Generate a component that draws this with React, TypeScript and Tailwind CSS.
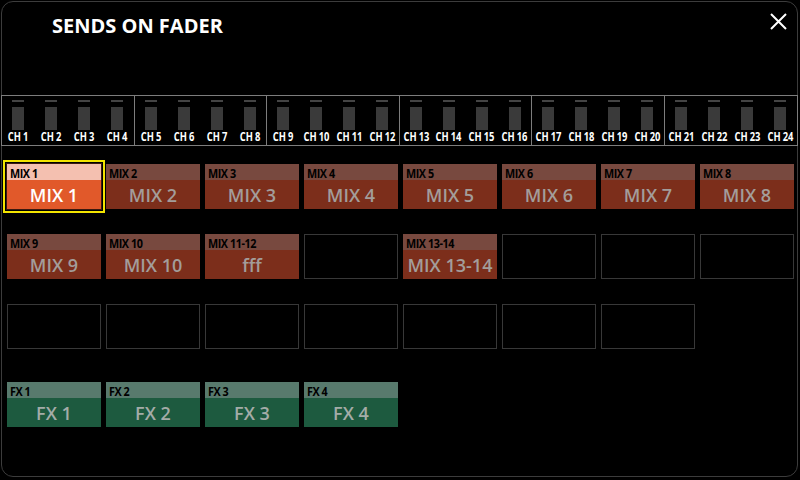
type Tile =
  | { kind: "mix"; label: string; name: string; selected?: boolean }
  | { kind: "fx"; label: string; name: string }
  | { kind: "empty" };

const channels = Array.from({ length: 24 }, (_, i) => `CH ${i + 1}`);

const row1: Tile[] = Array.from({ length: 8 }, (_, i) => ({
  kind: "mix",
  label: `MIX ${i + 1}`,
  name: `MIX ${i + 1}`,
  selected: i === 0,
}));

const row2: Tile[] = [
  { kind: "mix", label: "MIX 9", name: "MIX 9" },
  { kind: "mix", label: "MIX 10", name: "MIX 10" },
  { kind: "mix", label: "MIX 11-12", name: "fff" },
  { kind: "empty" },
  { kind: "mix", label: "MIX 13-14", name: "MIX 13-14" },
  { kind: "empty" },
  { kind: "empty" },
  { kind: "empty" },
];

const row3: Tile[] = Array.from({ length: 7 }, () => ({ kind: "empty" }));

const row4: Tile[] = Array.from({ length: 4 }, (_, i) => ({
  kind: "fx",
  label: `FX ${i + 1}`,
  name: `FX ${i + 1}`,
}));

const TileBox = ({ tile }: { tile: Tile }) => {
  if (tile.kind === "empty") {
    return <div className="h-[45px] border border-[#383838]" />;
  }
  const sel = tile.kind === "mix" && tile.selected;
  const head =
    tile.kind === "fx" ? "bg-[#587a6d]" : sel ? "bg-[#f4c0b0]" : "bg-[#78493f]";
  const body =
    tile.kind === "fx"
      ? "bg-[#1d5a3f] text-[#a4aca8]"
      : sel
        ? "bg-[#e1592a] text-white"
        : "bg-[#7c2e1b] text-[#a39d9a]";
  return (
    <div
      className={`h-[45px] flex flex-col ${sel ? "outline-2 outline-offset-2 outline-[#f2e400] ring-1 ring-[#3a1a10]" : ""}`}
    >
      <div className={`h-[16px] ${head} pl-[3px] leading-[16px] text-black`}>
        <span className="inline-block origin-left scale-x-[0.9] text-[12px] font-bold tracking-[-0.5px] whitespace-nowrap">
          {tile.label}
        </span>
      </div>
      <div
        className={`flex-1 ${body} flex items-center justify-center text-[18px] font-semibold leading-none`}
      >
        {tile.name}
      </div>
    </div>
  );
};

const TileRow = ({ tiles, className = "" }: { tiles: Tile[]; className?: string }) => (
  <div className={`grid grid-cols-8 gap-x-[5px] pl-[5px] pr-[3px] ${className}`}>
    {tiles.map((t, i) => (
      <TileBox key={i} tile={t} />
    ))}
  </div>
);

export default function App() {
  return (
    <div className="w-[800px] h-[480px] bg-black pt-px pl-px font-['Open_Sans',sans-serif]">
      <div className="w-[797px] h-[476px] rounded-[12px] border border-[#3c3c3c] flex flex-col">
        <div className="h-[93px] flex justify-between">
          <div className="pl-[50px] pt-[10px] text-[20px] leading-[28px] font-bold text-white">
            SENDS ON FADER
          </div>
          <svg
            className="mt-[11px] mr-[10px]"
            width="17"
            height="17"
            viewBox="0 0 17 17"
            fill="none"
            stroke="white"
            strokeWidth="2"
          >
            <path d="M1 1 L16 16 M16 1 L1 16" />
          </svg>
        </div>

        <div className="-mx-px h-[51px] grid grid-cols-6 border border-[#7d7d7d] divide-x divide-[#7d7d7d]">
          {[0, 1, 2, 3, 4, 5].map((g) => (
            <div key={g} className="grid grid-cols-4">
              {channels.slice(g * 4, g * 4 + 4).map((ch) => (
                <div key={ch} className="flex flex-col items-center pt-[4px]">
                  <div className="w-[12px] h-[2px] bg-[#444444]" />
                  <div className="mt-[5px] w-[12px] h-[23px] bg-[#3a3a3a]" />
                  <div className="mt-[1px] h-[12px] flex justify-center w-full">
                    <span className="inline-block scale-x-[0.78] text-[12px] leading-[12px] font-bold text-white tracking-[-0.2px] whitespace-nowrap">
                      {ch}
                    </span>
                  </div>
                </div>
              ))}
            </div>
          ))}
        </div>

        <TileRow tiles={row1} className="mt-[18px]" />
        <TileRow tiles={row2} className="mt-[25px]" />
        <TileRow tiles={row3} className="mt-[25px]" />
        <TileRow tiles={row4} className="mt-[33px]" />
      </div>
    </div>
  );
}
